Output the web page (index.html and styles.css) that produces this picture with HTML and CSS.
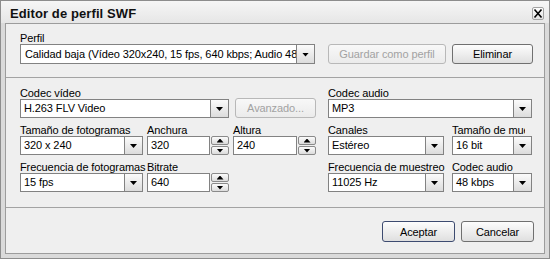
FILE: index.html
```html
<!DOCTYPE html>
<html lang="es">
<head>
    <meta charset="UTF-8">
    <title>Editor de perfil SWF</title>
    <link rel="stylesheet" href="styles.css">
</head>
<body>
    <div class="window">
        <div class="titlebar">
            <span class="title">Editor de perfil SWF</span>
            <span class="close">
                <svg width="10" height="11" viewBox="0 0 10 11"><path d="M1.5 1.5 L8.5 9.5 M8.5 1.5 L1.5 9.5" stroke="#000" stroke-width="1.6"/></svg>
            </span>
        </div>
        <div class="panel">
            <div class="section profile">
                <span class="label">Perfil</span>
                <div class="profile-row">
                    <div class="combo combo-profile">
                        <div class="combo-value">Calidad baja (Vídeo 320x240, 15 fps, 640 kbps; Audio 48 kbps, 11025 Hz, Estéreo)</div>
                        <div class="combo-arrow"></div>
                    </div>
                    <button class="btn btn-save" disabled>Guardar como perfil</button>
                    <button class="btn btn-delete">Eliminar</button>
                </div>
            </div>
            <div class="section settings">
                <div class="video">
                    <div class="field span2">
                        <span class="label">Codec vídeo</span>
                        <div class="combo">
                            <div class="combo-value">H.263 FLV Video</div>
                            <div class="combo-arrow"></div>
                        </div>
                    </div>
                    <div class="field field-end">
                        <button class="btn btn-advanced" disabled>Avanzado...</button>
                    </div>

                    <div class="field">
                        <span class="label">Tamaño de fotogramas</span>
                        <div class="combo">
                            <div class="combo-value">320 x 240</div>
                            <div class="combo-arrow"></div>
                        </div>
                    </div>
                    <div class="field">
                        <span class="label">Anchura</span>
                        <div class="spin">
                            <div class="spin-value">320</div>
                            <div class="spin-btns"><span class="up"></span><span class="down"></span></div>
                        </div>
                    </div>
                    <div class="field">
                        <span class="label">Altura</span>
                        <div class="spin">
                            <div class="spin-value">240</div>
                            <div class="spin-btns"><span class="up"></span><span class="down"></span></div>
                        </div>
                    </div>

                    <div class="field">
                        <span class="label">Frecuencia de fotogramas</span>
                        <div class="combo">
                            <div class="combo-value">15 fps</div>
                            <div class="combo-arrow"></div>
                        </div>
                    </div>
                    <div class="field">
                        <span class="label">Bitrate</span>
                        <div class="spin">
                            <div class="spin-value">640</div>
                            <div class="spin-btns"><span class="up"></span><span class="down"></span></div>
                        </div>
                    </div>
                </div>

                <div class="audio">
                    <div class="field span2">
                        <span class="label">Codec audio</span>
                        <div class="combo">
                            <div class="combo-value">MP3</div>
                            <div class="combo-arrow"></div>
                        </div>
                    </div>

                    <div class="field">
                        <span class="label">Canales</span>
                        <div class="combo">
                            <div class="combo-value">Estéreo</div>
                            <div class="combo-arrow"></div>
                        </div>
                    </div>
                    <div class="field">
                        <span class="label clip">Tamaño de muestra</span>
                        <div class="combo">
                            <div class="combo-value">16 bit</div>
                            <div class="combo-arrow"></div>
                        </div>
                    </div>

                    <div class="field">
                        <span class="label">Frecuencia de muestreo</span>
                        <div class="combo">
                            <div class="combo-value">11025 Hz</div>
                            <div class="combo-arrow"></div>
                        </div>
                    </div>
                    <div class="field">
                        <span class="label">Codec audio</span>
                        <div class="combo">
                            <div class="combo-value">48 kbps</div>
                            <div class="combo-arrow"></div>
                        </div>
                    </div>
                </div>
            </div>
            <div class="section footer">
                <button class="btn btn-default">Aceptar</button>
                <button class="btn">Cancelar</button>
            </div>
        </div>
    </div>
</body>
</html>
```

FILE: styles.css
```css
* {
    box-sizing: border-box;
}

body {
    margin: 0;
    font-family: "Liberation Sans", Arial, sans-serif;
    font-size: 11px;
    letter-spacing: -0.1px;
    color: #000;
    background: #fff;
}

.window {
    width: 550px;
    height: 259px;
    border: 1px solid #8d8d8d;
    background: #dadada;
    display: flex;
    flex-direction: column;
}

/* Title bar */
.titlebar {
    height: 22px;
    display: flex;
    justify-content: space-between;
    align-items: flex-start;
    padding: 5px 5px 0 9px;
    background: linear-gradient(#f6f6f6, #e6e6e6);
}

.title {
    font-size: 13px;
    font-weight: bold;
    line-height: 15px;
    letter-spacing: 0.1px;
    color: #111;
}

.close {
    width: 12px;
    height: 13px;
    margin-top: 1px;
    border: 1px solid #a3a3a3;
    border-radius: 2px;
    background: linear-gradient(#fdfdfd, #e2e2e2);
    display: flex;
    align-items: center;
    justify-content: center;
}

/* Main panel */
.panel {
    flex: 1;
    margin: 0 4px 4px;
    border: 1px solid #9c9c9c;
    background: #efefef;
    display: flex;
    flex-direction: column;
}

.section {
    padding-left: 14px;
    padding-right: 10px;
}

.section + .section {
    border-top: 1px solid #a3a3a3;
}

.label {
    display: block;
    height: 12px;
    line-height: 12px;
    white-space: nowrap;
}

.label.clip {
    width: 73px;
    overflow: hidden;
}

.profile {
    padding-top: 8px;
    padding-bottom: 13px;
}

.profile-row {
    display: flex;
}

.combo-profile {
    width: 295px;
    margin-right: 13px;
}

.combo-profile .combo-value {
    padding-left: 4px;
}

.btn-save {
    width: 118px;
    margin-right: 6px;
}

.btn-delete {
    width: 81px;
}

/* Combo boxes */
.combo {
    display: flex;
    height: 20px;
}

.combo-value {
    flex: 1;
    min-width: 0;
    background: #fff;
    border: 1px solid #828282;
    padding: 0 3px;
    line-height: 18px;
    overflow: hidden;
    white-space: nowrap;
}

.combo-arrow {
    width: 18px;
    border: 1px solid #828282;
    border-left: 0;
    background: linear-gradient(#fbfbfb, #dcdcdc);
    display: flex;
    align-items: center;
    justify-content: center;
}

.combo-arrow::after {
    content: '';
    width: 7px;
    height: 4px;
    margin-top: 1px;
    background: #000;
    clip-path: polygon(0 0, 100% 0, 50% 100%);
}

/* Spin boxes */
.spin {
    display: flex;
    gap: 1px;
    height: 19px;
}

.spin-value {
    flex: 1;
    background: #fff;
    border: 1px solid #828282;
    padding: 0 3px;
    line-height: 17px;
}

.spin-btns {
    width: 18px;
    display: flex;
    flex-direction: column;
    gap: 1px;
}

.spin-btns span {
    flex: 1;
    border: 1px solid #8a8a8a;
    border-radius: 2px;
    background: linear-gradient(#fbfbfb, #dcdcdc);
    display: flex;
    align-items: center;
    justify-content: center;
}

.spin-btns span::after {
    content: '';
    width: 7px;
    height: 4px;
    background: #000;
}

.spin-btns .up::after {
    clip-path: polygon(50% 0, 100% 100%, 0 100%);
}

.spin-btns .down::after {
    clip-path: polygon(0 0, 100% 0, 50% 100%);
}

/* Settings grid */
.settings {
    display: flex;
    gap: 12px;
    padding-top: 9px;
    padding-bottom: 15px;
}

.settings .combo {
    height: 19px;
}

.settings .combo-value {
    line-height: 17px;
}

.video {
    display: grid;
    grid-template-columns: 123px 82px 83px;
    column-gap: 4px;
    row-gap: 6px;
}

.audio {
    display: grid;
    grid-template-columns: 116px 80px;
    column-gap: 8px;
    row-gap: 6px;
}

.span2 {
    grid-column: span 2;
}

.field-end {
    display: flex;
    align-items: flex-end;
}

.btn-advanced {
    width: 81px;
    height: 19px;
    margin-left: 2px;
}

/* Buttons */
.btn {
    height: 20px;
    padding: 0;
    font: inherit;
    letter-spacing: inherit;
    color: #000;
    border: 1px solid #707070;
    border-radius: 3px;
    background: linear-gradient(#fdfdfd, #dfdfdf);
}

.btn:disabled {
    color: #a2a2a2;
    border-color: #b8b8b8;
    background: linear-gradient(#f8f8f8, #ebebeb);
}

.btn-default {
    border-color: #3d4b70;
}

.footer {
    display: flex;
    justify-content: flex-end;
    gap: 6px;
    padding-top: 13px;
    padding-bottom: 11px;
}

.footer .btn {
    width: 73px;
    height: 21px;
}
```
